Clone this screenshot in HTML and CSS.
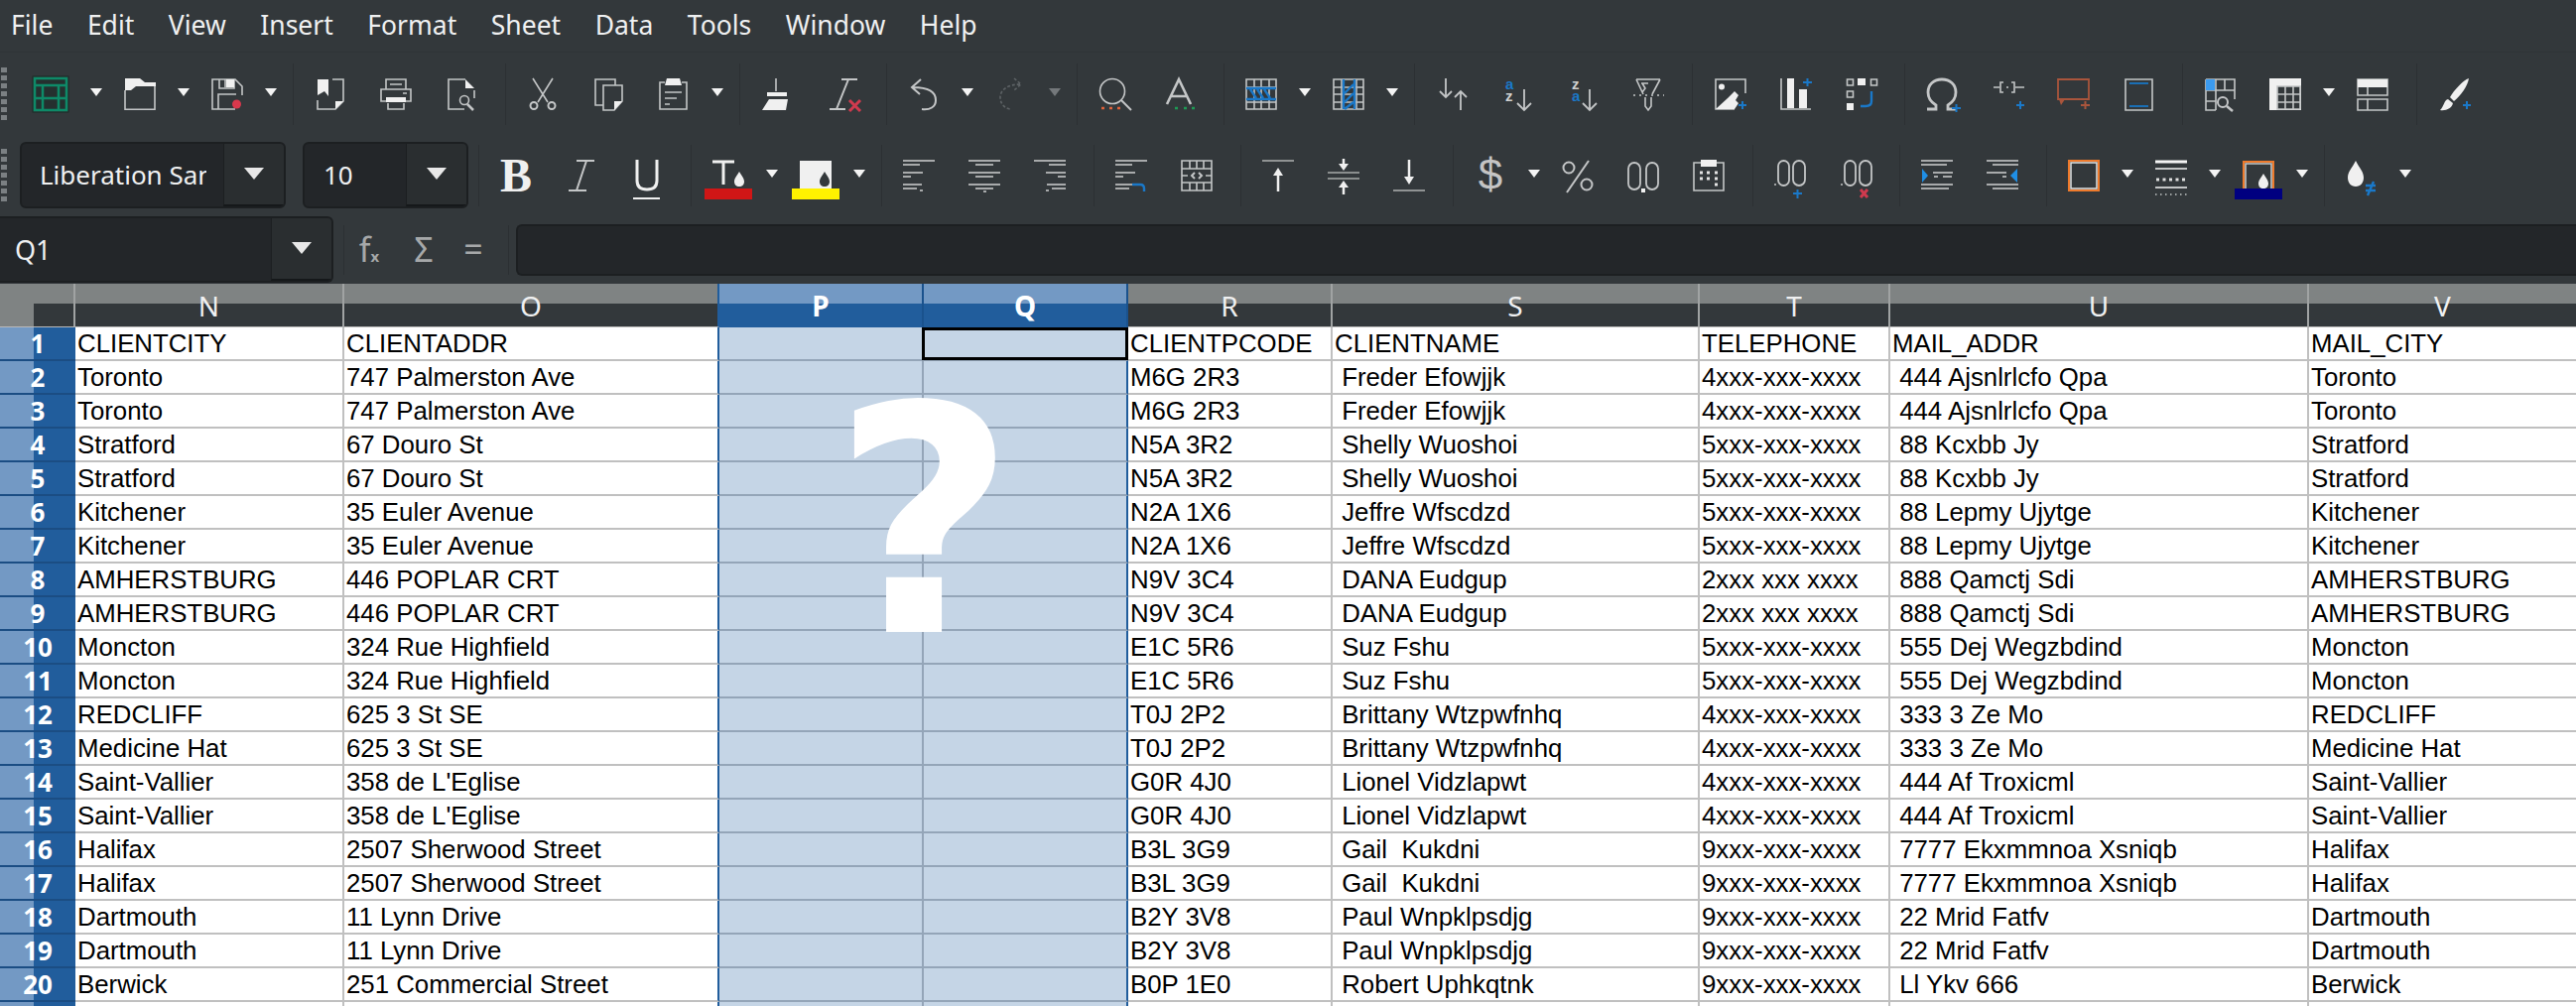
FILE: index.html
```html
<!DOCTYPE html>
<html lang="en">
<head>
<meta charset="utf-8">
<title>Calc</title>
<link rel="stylesheet" href="styles.css">
</head>
<body>
<nav class="menu"><span>File</span><span>Edit</span><span>View</span><span>Insert</span><span>Format</span><span>Sheet</span><span>Data</span><span>Tools</span><span>Window</span><span>Help</span></nav>

<div class="tb tb1">
<i class="grip g1"></i>
<div class="b b70"><svg class="new" viewBox="0 0 38 38"><rect width="38" height="38" rx="2" fill="#25302f" stroke="none"/><path d="M3 3h32v32H3zM3 10h32M3 23h32M11 10v25M27 10v25"/></svg></div><i class="a"></i>
<div class="b"><svg class="i" viewBox="0 0 32 32"><path class="f" d="M1 0h15l5 4h11v4H12l-5 4H1z"/><path d="M1 12v19.200h30V8"/></svg></div><i class="a"></i>
<div class="b"><svg class="i" viewBox="0 0 32 32"><path d="M22 1h2l7 7v9M24 31H1V1h21M8 1v9h15V1M7 31V16h18M14 1v8"/><path class="f" d="M15 1h8v8h-8z"/><circle class="rf" cx="25.500" cy="26" r="4.500"/></svg></div><i class="a"></i><i class="sep"></i>
<div class="b"><svg class="i" viewBox="0 0 32 32"><path class="f" d="M3 1h11v17l-4-5-7 4z"/><path d="M18 1h11v22l-8 8H3v-9"/><path class="f" d="M21 31v-8h8z"/></svg></div>
<div class="b"><svg class="i" viewBox="0 0 32 32"><path d="M6 11V1h20v10M6 23H1V11h30v12h-5M10 6h12M23 15h4M8 25v6h16v-6"/><path class="f" d="M6 19h20v5H6z"/></svg></div>
<div class="b"><svg class="i" viewBox="0 0 32 32"><path d="M20 1H3v30h16M29 12v8"/><path class="f" d="M20 1l9 9h-9z"/><circle cx="19" cy="22" r="4.500"/><path d="M22 26l6 6" stroke-width="2.500"/></svg></div><i class="sep"></i>
<div class="b"><svg class="i" viewBox="0 0 32 32"><path d="M6 0l15 24M26 0L11 24"/><circle cx="7" cy="27.500" r="3.500" stroke-width="2"/><circle cx="25" cy="27.500" r="3.500" stroke-width="2"/></svg></div>
<div class="b"><svg class="i" viewBox="0 0 32 32"><path d="M11 27H3V1h20v6M11 7h19v16l-8 9H11z"/><path class="f" d="M22 32v-9h8z"/></svg></div>
<div class="b"><svg class="i" viewBox="0 0 32 32"><path d="M7 4H2v27h27V4h-5M7 14h17M7 20h12M7 26h5"/><path class="f" d="M7 7l2-7h13l2 7z"/></svg></div><i class="a"></i><i class="sep"></i>
<div class="b"><svg class="i" viewBox="0 0 32 32"><path d="M15 0v13"/><path class="f" d="M6 14h20v4H6zM8 21h19l-2 11H1z"/></svg></div>
<div class="b"><svg class="i" viewBox="0 0 32 32"><path d="M15 1h16M3 31h16M22 1L10 31" stroke-width="2"/><path class="rs" d="M23 22l11 11M34 22L23 33"/></svg></div><i class="sep"></i>
<div class="b"><svg class="i" viewBox="0 0 32 32"><path d="M13 1L4 9l8 7M5 9c14 0 23 4 23 13 0 7-6 10-14 9" stroke-width="2"/></svg></div><i class="a"></i>
<div class="b"><svg class="i dim" viewBox="0 0 32 32"><path d="M19 0l7 6-7 6M25 6C12 6 5 12 5 19c0 7 5 12 11 12" stroke-dasharray="3 2"/></svg></div><i class="a off"></i><i class="sep"></i>
<div class="b"><svg class="i" viewBox="0 0 32 32"><circle cx="14" cy="13" r="12.500"/><path d="M23 22l10 10" stroke-width="2"/><path class="or" d="M3 30h3M11 30h3M19 30h3" stroke-width="2.500"/></svg></div>
<div class="b"><svg class="i" viewBox="0 0 32 32"><path d="M3 26L15 1l12 25M7 18h16" stroke-width="2.600"/><path class="gr" d="M11 30h3M20 30h3M28 30h3" stroke-width="2.500"/></svg></div><i class="sep"></i>
<div class="b"><svg class="i" viewBox="0 0 32 32"><path d="M1 1h30v30H1zM1 9h30M1 24h30M9 1v30M16 1v30M24 1v30"/><path class="bl thick" d="M1 10h30M1 21h30M5 11l6 9M12 11l6 9M19 11l6 9"/></svg></div><i class="a"></i>
<div class="b"><svg class="i" viewBox="0 0 32 32"><path d="M1 1h30v30H1zM1 9h30M1 16h30M1 24h30M9 1v30M24 1v30"/><path class="bl thick" d="M11 1v30M22 1v30M21 6l-9 9M21 15l-9 9M21 24l-9 7"/></svg></div><i class="a"></i><i class="sep"></i>
<div class="b"><svg class="i" viewBox="0 0 32 32"><path d="M10 0v19M4 13l6 6 6-6M25 32V13M19 19l6-6 6 6" stroke-width="1.800"/></svg></div>
<div class="b"><svg class="i" viewBox="0 0 32 32"><text class="lt blt" x="4" y="11">a</text><text class="lt" x="4" y="23">z</text><path d="M23 11v21M16 25l7 7 7-7" stroke-width="1.800"/></svg></div>
<div class="b"><svg class="i" viewBox="0 0 32 32"><text class="lt" x="5" y="11">z</text><text class="lt blt" x="5" y="23">a</text><path d="M23 11v21M16 25l7 7 7-7" stroke-width="1.800"/></svg></div>
<div class="b"><svg class="i" viewBox="0 0 32 32"><path d="M4 1h24M4 1l7 15M28 1l-8 15M9 5h7M10 5l3 5-3 4M13 19v9l3 4 3-4v-9"/><path d="M1 17h31" stroke-dasharray="2 4"/></svg></div><i class="sep"></i>
<div class="b"><svg class="i" viewBox="0 0 32 32"><path d="M32 15V1H2v30h19"/><circle class="f" cx="8" cy="8.500" r="3"/><path class="f" d="M2 31l12-11 7-7 4 4-3 5 3 3-4 6z"/><path class="bl pl" d="M25 27h8M29 23v8"/></svg></div>
<div class="b"><svg class="i" viewBox="0 0 32 32"><path d="M2 0v31h30" /><path class="f" d="M8 0h7v30H8zM20 11h8v19h-8z"/><path class="bl pl" d="M24 4h9M28.500 0v8"/></svg></div>
<div class="b"><svg class="i" viewBox="0 0 32 32"><path d="M2.500 1h6v6h-6zM26.500 1h6v6h-6zM2.500 13h6v6h-6z"/><path class="f" d="M13 0h8v7h-8zM2 25h7v7H2z"/><path class="bl thick" d="M27 13v10q0 5-6 5h-5"/></svg></div><i class="sep"></i>
<div class="b"><svg class="i" viewBox="0 0 32 32"><path d="M1 31h9v-4C5 24 2 19 2 14 2 6 8 1 16 1s14 5 14 13c0 5-3 10-8 13v4h9" stroke-width="2.800"/><path class="bl pl" d="M26 30h9M30.500 26v8"/></svg></div>
<div class="b"><svg class="i" viewBox="0 0 32 32"><path d="M2 9h6M12 4H9v10h3M20 4h3v10h-3M24 9h9M15 9h2"/><path class="bl pl" d="M25 27h8M29 23v8"/></svg></div>
<div class="b"><svg class="i" viewBox="0 0 32 32"><path class="ob" d="M1 1h31v20H1z"/><path class="ofl" d="M2 21h6l-4 6z"/><path class="ob pl" d="M24 27h9M28.500 23v8"/></svg></div>
<div class="b"><svg class="i" viewBox="0 0 32 32"><path d="M3 1h27v31H3z"/><path class="bd" d="M7 5h19M7 28h19"/></svg></div><i class="sep"></i>
<div class="b"><svg class="i" viewBox="0 0 32 32"><path d="M2 1h29v20M2 1v31h10M2 12h15M2 23h10M2 1M12 1v31M21 1v11M12 12h19"/><path class="cell" d="M2 1h9v11H2z"/><circle cx="19" cy="24" r="5" stroke-width="2"/><path d="M23 28l6 5" stroke-width="2.500"/></svg></div>
<div class="b"><svg class="i" viewBox="0 0 32 32"><path class="f" d="M0 0h32v32H0z"/><path class="bgf" d="M8 8h23v23H8z"/><path d="M8 8h23v23H8zM8 16h23M8 24h23M16 8v23M24 8v23"/></svg></div><i class="a"></i>
<div class="b"><svg class="i" viewBox="0 0 32 32"><path d="M1 1h30v16H1zM1 21h30v11H1zM11 9v8M11 21v11"/><path class="f" d="M1 1h30v8H1z"/></svg></div><i class="sep"></i>
<div class="b"><svg class="i" viewBox="0 0 32 32"><path class="f" d="M31 0c-6 2-15 12-19 19l4 4c6-5 14-15 15-23zM10 21c-4 1-4 7-8 11 6 1 12-2 13-7z"/><path class="bl pl" d="M25 27h8M29 23v8"/></svg></div>
</div>

<div class="tb tb2">
<i class="grip g2"></i>
<div class="combo fname"><span class="ct">Liberation Sans</span><i class="dd"></i></div>
<div class="combo fsize"><span class="ct">10</span><i class="dd"></i></div>
<i class="sep short"></i>
<div class="b"><span class="bold">B</span></div>
<div class="b"><svg class="i" viewBox="0 0 32 32"><path d="M11 1h18M3 31h18M21 1L11 31" stroke-width="2"/></svg></div>
<div class="b"><svg class="i wh" viewBox="0 0 32 32"><path d="M6 0v21c0 7 4 9 10 9s10-2 10-9V0" stroke-width="3"/><path d="M2 39h27" stroke-width="2"/></svg></div><i class="sep"></i>
<div class="b"><svg class="i tall" viewBox="0 0 48 40"><path d="M8 2h22M19 2v23" stroke="#f0f0f0" stroke-width="3"/><path class="f" d="M35 12c3 5 5 7 5 10 0 3-2 5-5 5s-5-2-5-5c0-3 2-5 5-10z"/><path class="redbar" d="M0 29h48v11H0z"/></svg></div><i class="a"></i>
<div class="b"><svg class="i tall" viewBox="0 0 48 40"><path class="f" d="M8 1h32v28H8z"/><path class="dk" d="M33 12c3 5 5 7 5 10 0 3-2 5-5 5s-5-2-5-5c0-3 2-5 5-10z"/><path class="yelbar" d="M0 29h48v11H0z"/></svg></div><i class="a"></i><i class="sep"></i>
<div class="b"><svg class="i ln" viewBox="0 0 32 32"><path d="M0 1h32M0 5h17M0 13h20M0 17h8M0 25h19M0 29h14M17 31h3"/></svg></div>
<div class="b"><svg class="i ln" viewBox="0 0 32 32"><path d="M0 1h32M7 5h18M0 13h32M7 17h18M0 25h32M7 29h18M15 32h3"/></svg></div>
<div class="b"><svg class="i ln" viewBox="0 0 32 32"><path d="M0 1h32M15 5h17M12 13h20M24 17h8M13 25h19M18 29h14M12 31h3"/></svg></div><i class="sep"></i>
<div class="b"><svg class="i ln" viewBox="0 0 32 32"><path d="M0 1h32M0 5h17M0 13h20M0 17h8M0 25h17M0 29h14"/><path class="bl thick" d="M17 25h8q4 0 4 4v3"/></svg></div>
<div class="b"><svg class="i" viewBox="0 0 32 32"><path d="M1 1h30v30H1zM1 9h9M22 9h9M1 16h6M25 16h6M1 23h9M22 23h9M1 9h30M1 23h30M9 1v8M9 23v8M16 1v8M16 23v8M23 1v8M23 23v8"/><path d="M14 13l-3 3 3 3M18 13l3 3-3 3" stroke-width="2"/></svg></div><i class="sep"></i>
<div class="b"><svg class="i wh" viewBox="0 0 32 32"><path d="M0 1h32" stroke="#a8aaab"/><path d="M16 32V12" stroke-width="2.500"/><path class="f" d="M16 8l5 8H11z"/></svg></div>
<div class="b"><svg class="i wh" viewBox="0 0 32 32"><path d="M0 13h32M0 19h32" stroke="#a8aaab"/><path d="M16 -1v7M16 35v-7" stroke-width="2.500"/><path class="f" d="M16 11l5-7H11zM16 21l5 7H11z"/></svg></div>
<div class="b"><svg class="i wh" viewBox="0 0 32 32"><path d="M0 31h32" stroke="#a8aaab"/><path d="M16 0v20" stroke-width="2.500"/><path class="f" d="M16 25l5-8H11z"/></svg></div><i class="sep"></i>
<div class="b"><svg class="i" viewBox="0 0 32 32"><text class="sym" x="16" y="30">$</text></svg></div><i class="a"></i>
<div class="b"><svg class="i" viewBox="0 0 32 32"><circle cx="7" cy="8" r="5.500" stroke-width="2"/><circle cx="25" cy="25" r="5.500" stroke-width="2"/><path d="M27 1L5 33" stroke-width="2"/></svg></div>
<div class="b"><svg class="i" viewBox="0 0 32 32"><rect x="1" y="3" width="12" height="27" rx="6" stroke-width="1.800"/><rect x="19" y="3" width="12" height="27" rx="6" stroke-width="1.800"/><path class="f" d="M14 29h4v4h-4z"/></svg></div>
<div class="b"><svg class="i" viewBox="0 0 32 32"><path d="M8 3H1v28h30V3h-7"/><path class="f" d="M8 0h16v7H8z"/><path class="dots" d="M7 13h3M14 13h3M22 13h3M7 19h3M14 19h3M22 19h3M22 25h3"/></svg></div><i class="sep"></i>
<div class="b"><svg class="i" viewBox="0 0 32 32"><rect x="4" y="1" width="11" height="25" rx="5.500" stroke-width="1.800"/><rect x="19" y="1" width="12" height="25" rx="6" stroke-width="1.800"/><path d="M0 25h2"/><path class="bl pl" d="M19 34h9M23.500 30v9"/></svg></div>
<div class="b"><svg class="i" viewBox="0 0 32 32"><rect x="5" y="1" width="11" height="25" rx="5.500" stroke-width="1.800"/><rect x="20" y="1" width="12" height="25" rx="6" stroke-width="1.800"/><path d="M1 25h2"/><path class="rs" d="M21 30l7 8M28 30l-7 8"/></svg></div><i class="sep"></i>
<div class="b"><svg class="i ln" viewBox="0 0 32 32"><path d="M0 1h32M0 5h26M12 13h20M13 17h4M22 17h9M0 25h32M0 29h28"/><path class="blf" d="M1 9l6 7-6 7z"/></svg></div>
<div class="b"><svg class="i ln" viewBox="0 0 32 32"><path d="M0 1h32M6 5h26M0 13h20M16 17h4M0 25h32M6 29h26"/><path class="blf" d="M31 9l-7 7 7 7z"/></svg></div><i class="sep"></i>
<div class="b"><svg class="i" viewBox="0 0 32 32"><path d="M1 1h30v30H1z" stroke="#ee7a2c" stroke-width="2"/><path d="M3 3h26v26H3z" stroke="#e4e4e4" stroke-width="1.500"/></svg></div><i class="a"></i>
<div class="b"><svg class="i" viewBox="0 0 32 32"><path d="M0 2h32" stroke="#f4f4f4" stroke-width="3"/><path d="M0 9h32M0 28h32" stroke-width="2"/><path d="M1 20h31" stroke-dasharray="3 3.500" stroke="#dedede" stroke-width="3"/><path d="M0 35h32" stroke-dasharray="1.500 3.500"/></svg></div><i class="a"></i>
<div class="b"><svg class="i tall" viewBox="0 0 48 40"><path d="M9 29V2h30v27" stroke="#ee7a2c" stroke-width="2"/><path d="M11 29V4h26v25"/><path class="f" d="M29 14c3 5 5 7 5 10 0 3-2 5-5 5s-5-2-5-5c0-3 2-5 5-10z"/><path class="navbar" d="M0 29h48v11H0z"/></svg></div><i class="a"></i><i class="sep"></i>
<div class="b"><svg class="i" viewBox="0 0 32 32"><path class="f" d="M10 1c4 8 8 11 8 17 0 5-3 9-8 9s-8-4-8-9c0-6 4-9 8-17z"/><path class="bl thick" d="M20 26h10M20 31h10M28 22l-6 14"/></svg></div><i class="a"></i>
</div>

<div class="fbar">
<div class="combo nbox"><span class="ct">Q1</span><i class="dd"></i></div>
<i class="fsep"></i>
<span class="fb-ic">f<small>x</small></span><span class="fb-ic">Σ</span><span class="fb-ic">=</span>
<i class="fsep"></i>
<div class="finput"></div>
</div>

<div class="sheet">
<table>
<colgroup><col class="w0"><col class="w1"><col class="w2"><col class="w3"><col class="w3"><col class="w3"><col class="w4"><col class="w5"><col class="w6"><col class="w1"></colgroup>
<thead><tr><th class="corner"></th><th>N</th><th class="pre">O</th><th class="on">P</th><th class="on">Q</th><th>R</th><th>S</th><th>T</th><th>U</th><th>V</th></tr></thead>
<tbody>
<tr><th>1</th><td>CLIENTCITY</td><td>CLIENTADDR</td><td></td><td><div class="cursor"></div></td><td>CLIENTPCODE</td><td>CLIENTNAME</td><td>TELEPHONE</td><td>MAIL_ADDR</td><td>MAIL_CITY</td></tr>
<tr><th>2</th><td>Toronto</td><td>747 Palmerston Ave</td><td></td><td></td><td>M6G 2R3</td><td> Freder Efowjjk</td><td>4xxx-xxx-xxxx</td><td> 444 Ajsnlrlcfo Qpa</td><td>Toronto</td></tr>
<tr><th>3</th><td>Toronto</td><td>747 Palmerston Ave</td><td></td><td></td><td>M6G 2R3</td><td> Freder Efowjjk</td><td>4xxx-xxx-xxxx</td><td> 444 Ajsnlrlcfo Qpa</td><td>Toronto</td></tr>
<tr><th>4</th><td>Stratford</td><td>67 Douro St</td><td></td><td></td><td>N5A 3R2</td><td> Shelly Wuoshoi</td><td>5xxx-xxx-xxxx</td><td> 88 Kcxbb Jy</td><td>Stratford</td></tr>
<tr><th>5</th><td>Stratford</td><td>67 Douro St</td><td></td><td></td><td>N5A 3R2</td><td> Shelly Wuoshoi</td><td>5xxx-xxx-xxxx</td><td> 88 Kcxbb Jy</td><td>Stratford</td></tr>
<tr><th>6</th><td>Kitchener</td><td>35 Euler Avenue</td><td></td><td></td><td>N2A 1X6</td><td> Jeffre Wfscdzd</td><td>5xxx-xxx-xxxx</td><td> 88 Lepmy Ujytge</td><td>Kitchener</td></tr>
<tr><th>7</th><td>Kitchener</td><td>35 Euler Avenue</td><td></td><td></td><td>N2A 1X6</td><td> Jeffre Wfscdzd</td><td>5xxx-xxx-xxxx</td><td> 88 Lepmy Ujytge</td><td>Kitchener</td></tr>
<tr><th>8</th><td>AMHERSTBURG</td><td>446 POPLAR CRT</td><td></td><td></td><td>N9V 3C4</td><td> DANA Eudgup</td><td>2xxx xxx xxxx</td><td> 888 Qamctj Sdi</td><td>AMHERSTBURG</td></tr>
<tr><th>9</th><td>AMHERSTBURG</td><td>446 POPLAR CRT</td><td></td><td></td><td>N9V 3C4</td><td> DANA Eudgup</td><td>2xxx xxx xxxx</td><td> 888 Qamctj Sdi</td><td>AMHERSTBURG</td></tr>
<tr><th>10</th><td>Moncton</td><td>324 Rue Highfield</td><td></td><td></td><td>E1C 5R6</td><td> Suz Fshu</td><td>5xxx-xxx-xxxx</td><td> 555 Dej Wegzbdind</td><td>Moncton</td></tr>
<tr><th>11</th><td>Moncton</td><td>324 Rue Highfield</td><td></td><td></td><td>E1C 5R6</td><td> Suz Fshu</td><td>5xxx-xxx-xxxx</td><td> 555 Dej Wegzbdind</td><td>Moncton</td></tr>
<tr><th>12</th><td>REDCLIFF</td><td>625 3 St SE</td><td></td><td></td><td>T0J 2P2</td><td> Brittany Wtzpwfnhq</td><td>4xxx-xxx-xxxx</td><td> 333 3 Ze Mo</td><td>REDCLIFF</td></tr>
<tr><th>13</th><td>Medicine Hat</td><td>625 3 St SE</td><td></td><td></td><td>T0J 2P2</td><td> Brittany Wtzpwfnhq</td><td>4xxx-xxx-xxxx</td><td> 333 3 Ze Mo</td><td>Medicine Hat</td></tr>
<tr><th>14</th><td>Saint-Vallier</td><td>358 de L'Eglise</td><td></td><td></td><td>G0R 4J0</td><td> Lionel Vidzlapwt</td><td>4xxx-xxx-xxxx</td><td> 444 Af Troxicml</td><td>Saint-Vallier</td></tr>
<tr><th>15</th><td>Saint-Vallier</td><td>358 de L'Eglise</td><td></td><td></td><td>G0R 4J0</td><td> Lionel Vidzlapwt</td><td>4xxx-xxx-xxxx</td><td> 444 Af Troxicml</td><td>Saint-Vallier</td></tr>
<tr><th>16</th><td>Halifax</td><td>2507 Sherwood Street</td><td></td><td></td><td>B3L 3G9</td><td> Gail  Kukdni</td><td>9xxx-xxx-xxxx</td><td> 7777 Ekxmmnoa Xsniqb</td><td>Halifax</td></tr>
<tr><th>17</th><td>Halifax</td><td>2507 Sherwood Street</td><td></td><td></td><td>B3L 3G9</td><td> Gail  Kukdni</td><td>9xxx-xxx-xxxx</td><td> 7777 Ekxmmnoa Xsniqb</td><td>Halifax</td></tr>
<tr><th>18</th><td>Dartmouth</td><td>11 Lynn Drive</td><td></td><td></td><td>B2Y 3V8</td><td> Paul Wnpklpsdjg</td><td>9xxx-xxx-xxxx</td><td> 22 Mrid Fatfv</td><td>Dartmouth</td></tr>
<tr><th>19</th><td>Dartmouth</td><td>11 Lynn Drive</td><td></td><td></td><td>B2Y 3V8</td><td> Paul Wnpklpsdjg</td><td>9xxx-xxx-xxxx</td><td> 22 Mrid Fatfv</td><td>Dartmouth</td></tr>
<tr><th>20</th><td>Berwick</td><td>251 Commercial Street</td><td></td><td></td><td>B0P 1E0</td><td> Robert Uphkqtnk</td><td>9xxx-xxx-xxxx</td><td> Ll Ykv 666</td><td>Berwick</td></tr>
<tr><th></th><td></td><td></td><td></td><td></td><td></td><td></td><td></td><td></td><td></td></tr>
</tbody>
</table>
<div class="mark">?</div>
</div>
</body>
</html>
```
FILE: styles.css
```css
* { box-sizing: border-box; }
html, body { margin: 0; height: 1014px; overflow: hidden; background: #33383b; }
body { font-family: "Noto Sans", sans-serif; color: #eff0f1; width: 2596px; }

.menu { display: flex; height: 53px; align-items: center; padding: 0 0 2px 0; border-bottom: 1px solid #2f3437; font-size: 26.500px; }
.menu span { padding: 0 17.250px; line-height: 36px; }
.menu span:first-child { padding-left: 11px; }

.tb { display: flex; align-items: center; }
.tb1 { height: 83px; }
.tb2 { height: 81px; }
.grip { width: 6px; height: 53px; margin-left: 1px; background: repeating-linear-gradient(#7b8083 0 5px, transparent 5px 8px); }
.g1 { margin-right: 9px; }
.g2 { margin-right: 13px; }

.b { width: 66px; height: 66px; flex: none; display: flex; align-items: center; justify-content: center; }
.b70 { width: 70px; }
.a { width: 22px; flex: none; height: 8px; margin-bottom: 4px; position: relative; }
.a::after { content: ""; position: absolute; left: 5px; top: 0; border-style: solid; border-width: 8px 6px 0; border-color: #f4f4f4 transparent transparent; }
.a.off::after { border-top-color: #74787b; }
.sep { width: 16px; height: 62px; flex: none; background: linear-gradient(#2c3033, #2c3033) 11px 0 / 1px 100% no-repeat; }
.sep.short { width: 15px; background-position: 10px 0; }

.i { width: 32px; height: 32px; overflow: visible; fill: none; stroke: #c4c6c7; stroke-width: 1.600; }
.i.tall { width: 48px; height: 40px; margin-top: 8px; }
.i.ln { stroke: #a8aaab; stroke-width: 2; }
.i.wh { stroke: #f0f0f0; }
.i.dim { stroke: #5d6265; }
.new { width: 38px; height: 38px; fill: none; stroke: #0e8a68; stroke-width: 2.500; }
.f { fill: #f0f0f0; stroke: none; }
.rf { fill: #d8384c; stroke: none; }
.bl { stroke: #1a78c8; }
.blf { fill: #1f8fe6; stroke: none; }
.rs { stroke: #d03a4e; stroke-width: 3; }
.or { stroke: #e0623a; }
.gr { stroke: #1e9a55; }
.ob { stroke: #a9553c; stroke-width: 1.800; }
.ofl { fill: #a9553c; stroke: none; }
.bd { stroke: #1a6fb5; stroke-width: 2; }
.pl { stroke-width: 2; }
.thick { stroke-width: 2.400; }
.cell { fill: #3b9bf0; stroke: none; }
.bgf { fill: #33383b; stroke: none; }
.dk { fill: #33383b; stroke: none; }
.dots { stroke: #e4e4e4; stroke-width: 3; }
.redbar { fill: #d01616; stroke: none; }
.yelbar { fill: #fff200; stroke: none; }
.navbar { fill: #000080; stroke: none; }
.lt { font: bold 15px "Liberation Sans", sans-serif; fill: #d0d0d0; stroke: none; }
.blt { fill: #1a78c8; }
.sym { font: 44px "Liberation Sans", sans-serif; fill: #c4c4c4; stroke: none; text-anchor: middle; }
.bold { font: bold 48px/1 "Liberation Serif", serif; color: #f0f0f0; }

.combo { display: flex; align-items: stretch; height: 67px; background: #232629; border: 2px solid #1c1f21; border-radius: 6px; flex: none; font-size: 26px; overflow: hidden; }
.ct { flex: 1; min-width: 0; overflow: hidden; white-space: nowrap; display: flex; align-items: center; padding-bottom: 2px; }
.dd { width: 61px; flex: none; background: #2a2e30; border-left: 1px solid #1c1f21; border-bottom: 2px solid #15181a; position: relative; }
.dd::after { content: ""; position: absolute; left: 50%; top: 50%; margin: -7px 0 0 -10px; border-style: solid; border-width: 12px 10px 0; border-color: #e8e8e8 transparent transparent; }
.fname { width: 268px; }
.fname .ct { padding-left: 18px; margin-right: 17px; }
.fsize { width: 167px; margin-left: 17px; }
.fsize .ct { padding-left: 19px; }

.fbar { display: flex; align-items: center; height: 69px; position: relative; }
.nbox { width: 336px; border-left: 0; border-radius: 0 6px 6px 0; }
.nbox .ct { padding-left: 15px; padding-bottom: 0; font-size: 27px; }
.fsep { width: 1px; height: 50px; flex: none; background: #2c3033; margin: 0 0 0 10px; }
.fb-ic { width: 50px; flex: none; text-align: center; color: #a6a8a9; font-size: 34px; line-height: 1; margin-bottom: 2px; }
.fb-ic:nth-of-type(2) { margin-left: 5px; }
.fb-ic small { font-size: 15px; font-weight: 700; }
.finput { flex: 1; height: 52px; margin-left: 7px; background: #232629; border: 2px solid #1c1f21; border-right: 0; border-radius: 6px 0 0 6px; }

.sheet { position: relative; height: 728px; overflow: hidden; }
table { border-collapse: separate; border-spacing: 0; table-layout: fixed; width: 2598px; background: #fff; }
.w0 { width: 76px; }
.w1 { width: 271px; }
.w2 { width: 378px; }
.w3 { width: 206px; }
.w4 { width: 370px; }
.w5 { width: 192px; }
.w6 { width: 422px; }

thead th { height: 44px; padding: 0; background: linear-gradient(#7f8383 20px, #33383b 20px); border-right: 2px solid #a0a3a3; border-bottom: 1px solid #b9b9b9; color: #eff0f1; font: 400 28px/38px "Noto Sans", sans-serif; }
thead th.corner { background: linear-gradient(90deg, #7f8383 34px, transparent 34px), linear-gradient(#7f8383 20px, #33383b 20px); }
thead th.pre { border-right-color: #215d9c; }
thead th.on { background: linear-gradient(#7399c4 20px, #215d9c 20px); border-right-color: #1a528d; border-bottom-color: #215d9c; font-weight: 700; color: #fff; }

tbody th { height: 34px; padding: 0; background: linear-gradient(90deg, #7399c4 34px, #215d9c 34px); border-bottom: 2px solid #1b4d83; color: #fff; font: 700 26px/30px "Noto Sans", sans-serif; }
td { height: 34px; padding: 1px 0 0 2px; border-right: 2px solid #c0c0c0; border-bottom: 2px solid #c0c0c0; color: #000; font: 25.800px/31px "Liberation Sans", sans-serif; white-space: pre; overflow: hidden; }
td:nth-child(3) { border-right-color: #215d9c; }
td:nth-child(4), td:nth-child(5) { background: #c5d5e6; border-bottom-color: #94a5b8; border-right-color: #94a5b8; }
td:nth-child(5) { border-right-color: #215d9c; position: relative; overflow: visible; }
.cursor { position: absolute; left: -2px; top: 0; right: -2px; bottom: -1px; border: 3px solid #000; }

.mark { position: absolute; left: 839px; top: 82px; font: 700 318px/1 "DejaVu Sans", sans-serif; color: #fff; }
```
